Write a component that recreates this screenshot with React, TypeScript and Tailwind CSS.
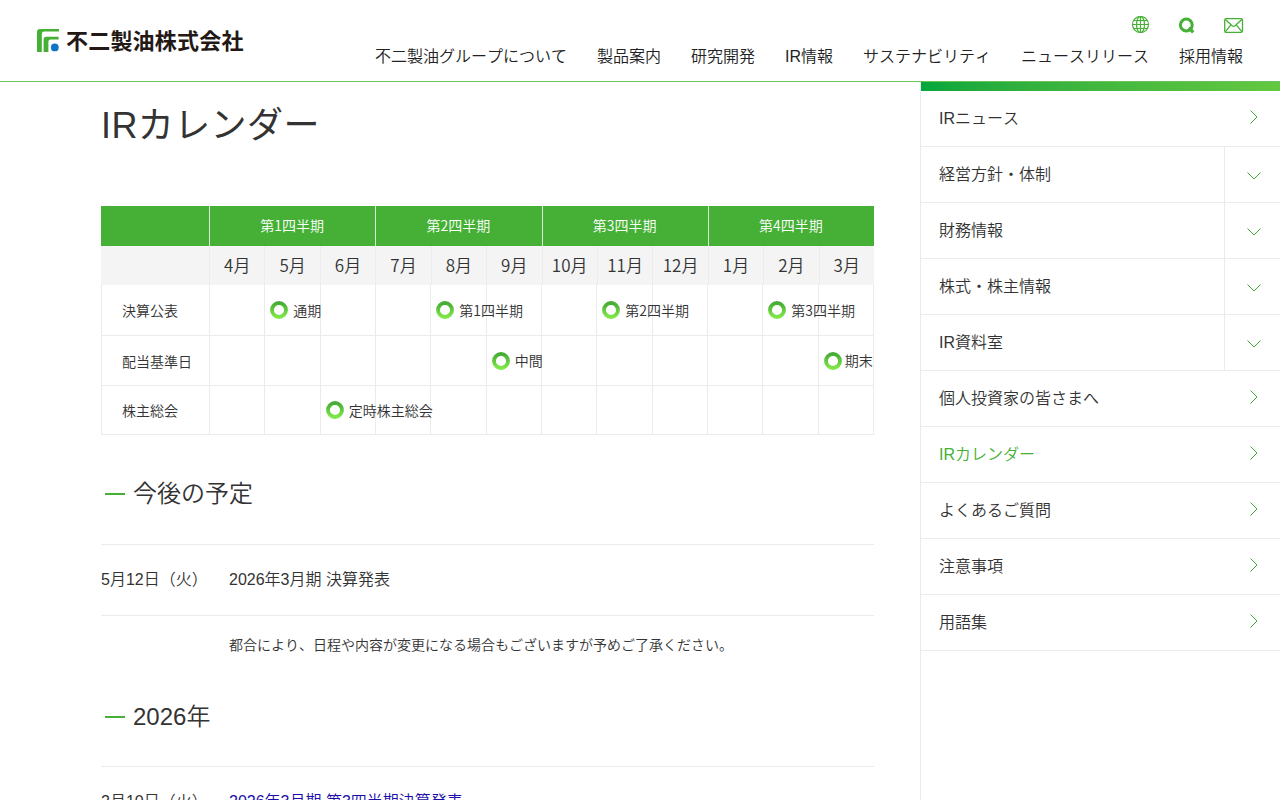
import type { ReactNode } from "react";

const FONT = "font-['Liberation_Sans','Noto_Sans_CJK_JP',sans-serif]";

const NAV = [
  "不二製油グループについて",
  "製品案内",
  "研究開発",
  "IR情報",
  "サステナビリティ",
  "ニュースリリース",
  "採用情報",
];

const SIDE: { label: string; sub?: boolean; current?: boolean }[] = [
  { label: "IRニュース" },
  { label: "経営方針・体制", sub: true },
  { label: "財務情報", sub: true },
  { label: "株式・株主情報", sub: true },
  { label: "IR資料室", sub: true },
  { label: "個人投資家の皆さまへ" },
  { label: "IRカレンダー", current: true },
  { label: "よくあるご質問" },
  { label: "注意事項" },
  { label: "用語集" },
];

const QUARTERS = ["第1四半期", "第2四半期", "第3四半期", "第4四半期"];
const MONTHS = [4, 5, 6, 7, 8, 9, 10, 11, 12, 1, 2, 3];

const ROWS: { label: string; events: Record<number, string> }[] = [
  { label: "決算公表", events: { 5: "通期", 8: "第1四半期", 11: "第2四半期", 2: "第3四半期" } },
  { label: "配当基準日", events: { 9: "中間", 3: "期末" } },
  { label: "株主総会", events: { 6: "定時株主総会" } },
];

function Logo() {
  return (
    <a href="#" className="ml-9 mt-[24px] flex h-[30px] items-center">
      <svg width="24" height="24" viewBox="0 0 24 24" className="mr-[6px] mt-[2px]">
        <path d="M1 24V4Q1 1 4 1H23V3.6H8.2Q5.8 3.6 5.8 6V24Z" fill="#45b035" />
        <path d="M7.6 24V11.5Q7.6 8.7 10.4 8.7H22.6V11.4H14.6Q12.4 11.4 12.4 13.6V24Z" fill="#45b035" />
        <circle cx="18.8" cy="19.4" r="3.9" fill="#0f75c4" />
      </svg>
      <span className="font-['Noto_Sans_CJK_JP',sans-serif] text-[22px] font-bold leading-[30px] tracking-[0.2px] text-[#231815]">
        不二製油株式会社
      </span>
    </a>
  );
}

function Tools() {
  return (
    <div className="flex h-[18px] items-center justify-end text-[#45b035]">
      <svg width="19" height="18" viewBox="0 0 19 18" fill="none" stroke="currentColor" strokeWidth="1.2">
        <circle cx="9.5" cy="8.5" r="8" />
        <ellipse cx="9.5" cy="8.5" rx="4" ry="8" />
        <path d="M9.5 0.5V16.5M1.5 8.5H17.5M2.8 4.5H16.2M2.8 12.5H16.2" />
      </svg>
      <svg width="18" height="18" viewBox="0 0 18 18" fill="none" stroke="currentColor" className="ml-[28px]">
        <circle cx="8.3" cy="9" r="5.9" strokeWidth="3" />
        <path d="M11 11.7L15.2 16.3" strokeWidth="3.2" />
      </svg>
      <svg width="20" height="18" viewBox="0 0 20 18" fill="none" stroke="currentColor" strokeWidth="1.3" className="ml-[28px]">
        <rect x="0.7" y="2.6" width="17.8" height="13.8" rx="1.5" />
        <path d="M1.4 3.5L8.2 9.8Q9.6 10.9 11 9.8L17.8 3.5M1.4 15.7L6.9 8.9M17.8 15.7L12.3 8.9" />
      </svg>
    </div>
  );
}

function Ring() {
  return (
    <svg width="18" height="18" viewBox="0 0 18 18" className="relative shrink-0">
      <defs>
        <linearGradient id="ring" x1="0" y1="0" x2="0" y2="1">
          <stop offset="0" stopColor="#45ac35" />
          <stop offset="1" stopColor="#80e748" />
        </linearGradient>
      </defs>
      <circle cx="9" cy="9" r="7" fill="#fff" stroke="url(#ring)" strokeWidth="3.8" />
    </svg>
  );
}

function CalendarTable() {
  return (
    <div className="w-[773px] font-['Noto_Sans_CJK_JP',sans-serif] text-[#333]">
      <div className="grid h-10 grid-cols-[108px_repeat(4,1fr)] bg-[#45b035] text-[14px] leading-[39px] text-white">
        <div />
        {QUARTERS.map((q) => (
          <div key={q} className="h-10 border-l border-white/80 pr-px text-center">
            {q}
          </div>
        ))}
      </div>
      <div className="grid h-[39px] grid-cols-[108px_repeat(12,1fr)] bg-[#f4f4f4] text-[17px] leading-[38px]">
        <div />
        {MONTHS.map((m) => (
          <div key={m} className="h-[39px] border-l border-[#ececec] text-center">
            {m}月
          </div>
        ))}
      </div>
      <div className="border-x border-[#ebebeb]">
        {ROWS.map((row, i) => (
          <div
            key={row.label}
            className={
              i === 0
                ? "grid h-[51px] grid-cols-[107px_repeat(12,1fr)] grid-rows-[50px] border-b border-[#ebebeb] text-[14px]"
                : i === 1
                  ? "grid h-[50px] grid-cols-[107px_repeat(12,1fr)] grid-rows-[49px] border-b border-[#ebebeb] text-[14px]"
                  : "grid h-[49px] grid-cols-[107px_repeat(12,1fr)] grid-rows-[48px] border-b border-[#ebebeb] text-[14px]"
            }
          >
            <div className="flex items-center pl-5 leading-5">{row.label}</div>
            {MONTHS.map((m) => (
              <div key={m} className="flex min-w-0 items-center border-l border-[#ebebeb] pl-[5px] leading-5">
                {row.events[m] && (
                  <>
                    <Ring />
                    <span className={m === 3 ? "relative ml-[3px] whitespace-nowrap pb-px" : "relative ml-[5px] whitespace-nowrap pb-px"}>
                      {row.events[m]}
                    </span>
                  </>
                )}
              </div>
            ))}
          </div>
        ))}
      </div>
    </div>
  );
}

function Heading({ children }: { children: ReactNode }) {
  return (
    <h2 className="flex h-9 items-center text-[24px] leading-9">
      <span className="ml-1 mr-2 h-[2px] w-5 bg-[#45b035]" />
      {children}
    </h2>
  );
}

function Sidebar() {
  return (
    <aside className="w-[360px] shrink-0 border-l border-[#ebebeb]">
      <div className="h-[9px] bg-linear-to-r from-[#00a73c] to-[#64c840]" />
      <ul>
        {SIDE.map((item) => (
          <li key={item.label} className="flex h-14 border-b border-[#ebebeb]">
            <a href="#" className={item.current ? "flex-1 pl-[18px] leading-[55px] text-[#45b035]" : "flex-1 pl-[18px] leading-[55px]"}>
              {item.label}
            </a>
            <span className={item.sub ? "flex w-14 justify-center border-l border-[#ebebeb] pl-[3px]" : "flex w-14 justify-center pl-[3px]"}>
              <svg width="16" height="16" viewBox="0 0 16 16" fill="none" stroke="#45a53d" className={item.sub ? "mt-[21px]" : "mt-[18px]"}>
                <path d={item.sub ? "M1.5 4.5L8 11L14.5 4.5" : "M4.5 1.5L11 8L4.5 14.5"} />
              </svg>
            </span>
          </li>
        ))}
      </ul>
    </aside>
  );
}

export default function App() {
  return (
    <div className={`${FONT} flex h-[800px] w-[1280px] flex-col overflow-hidden bg-white text-base font-[350] text-[#333] [font-kerning:none]`}>
      <header className="flex h-[82px] shrink-0 justify-between border-b border-[#6cc25c]">
        <Logo />
        <div className="mr-9 pt-4">
          <Tools />
          <nav className="mr-px mt-[11px] flex gap-[30px] leading-6 text-[#222]">
            {NAV.map((label) => (
              <a key={label} href="#" className="whitespace-nowrap">
                {label}
              </a>
            ))}
          </nav>
        </div>
      </header>

      <div className="flex min-h-0 flex-1">
        <main className="flex-1 pl-[101px] pr-[46px]">
          <h1 className="mt-[17px] text-[36px] font-normal leading-[54px] tracking-[0.4px]">IRカレンダー</h1>
          <div className="mt-[53px]">
            <CalendarTable />
          </div>

          <div className="mt-[41px]">
            <Heading>今後の予定</Heading>
          </div>
          <dl className="mt-8 flex h-[72px] border-y border-[#ebebeb] leading-[70px]">
            <dt className="w-32">5月12日（火）</dt>
            <dd>2026年3月期 決算発表</dd>
          </dl>
          <p className="mt-[19px] pl-32 text-[14px] leading-[21px]">
            都合により、日程や内容が変更になる場合もございますが予めご了承ください。
          </p>

          <div className="mt-[43px]">
            <Heading>2026年</Heading>
          </div>
          <dl className="mt-[31px] flex border-t border-[#ebebeb] leading-[70px]">
            <dt className="w-32">2月10日（火）</dt>
            <dd>
              <a href="#" className="text-[#1a0dab]">
                2026年3月期 第3四半期決算発表
              </a>
            </dd>
          </dl>
        </main>
        <Sidebar />
      </div>
    </div>
  );
}
